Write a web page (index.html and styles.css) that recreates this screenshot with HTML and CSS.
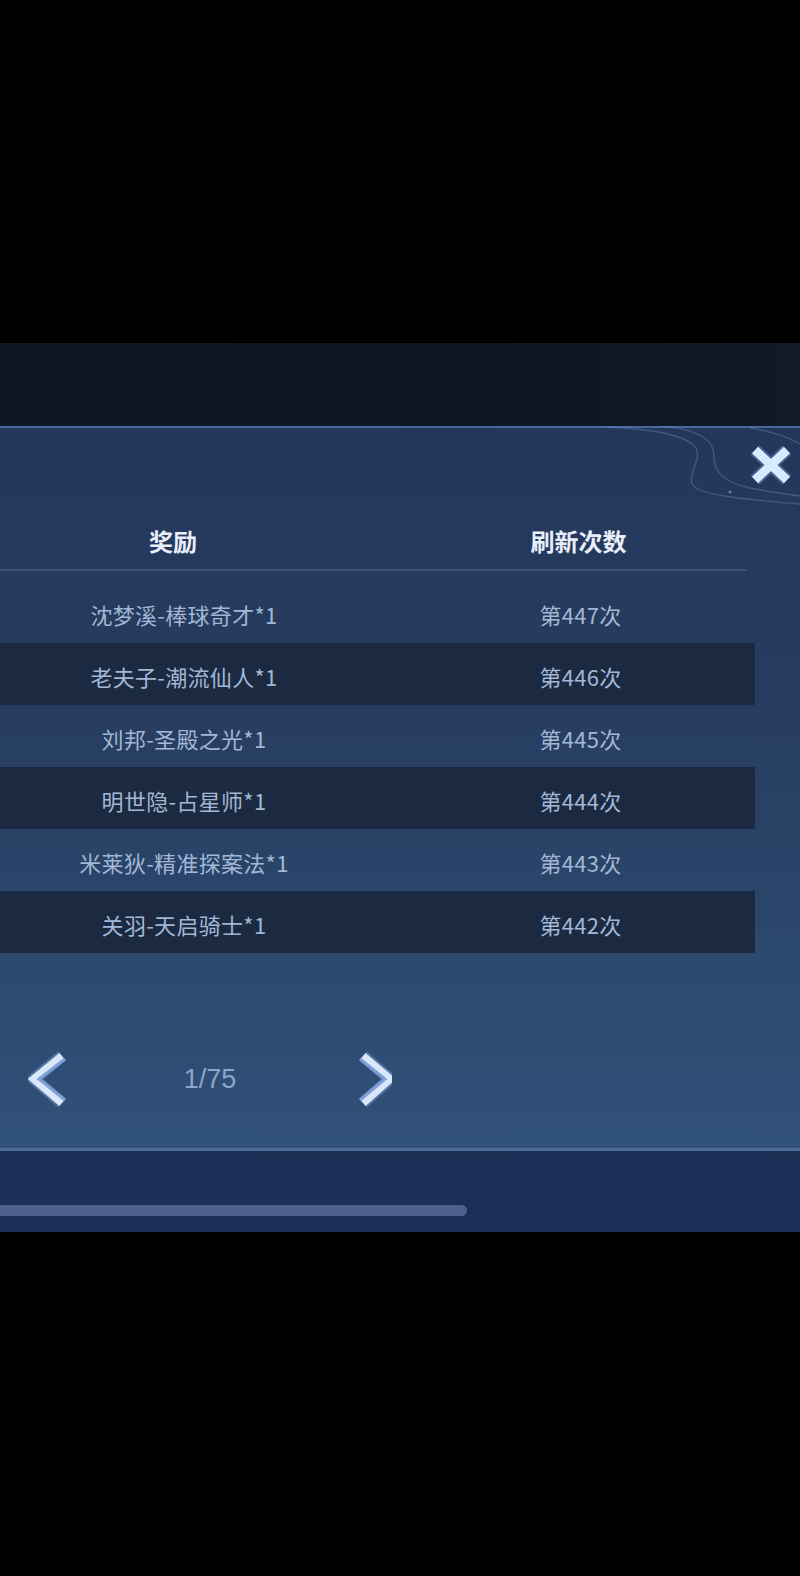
FILE: index.html
```html
<!DOCTYPE html>
<html lang="zh-CN">
<head>
    <meta charset="UTF-8">
    <meta name="viewport" content="width=device-width, initial-scale=1.0">
    <title>刷新记录</title>
    <link rel="stylesheet" href="styles.css">
</head>
<body>
    <div class="screen">
        <div class="letterbox-top"></div>
        <div class="topbar"></div>

        <div class="panel">
            <svg class="deco" width="200" height="90" viewBox="0 0 200 90">
                <path d="M7 1 C50 3, 86 8, 96 22 C102 34, 88 47, 92 58 C98 69, 140 73, 200 78" />
                <path d="M62 0 C100 4, 114 14, 114 30 C114 44, 120 55, 150 62 C170 66, 186 68, 200 70" />
                <path d="M150 2 C175 6, 190 12, 200 18" />
                <circle cx="130" cy="66" r="1.6" />
            </svg>

            <button class="close" aria-label="关闭">
                <svg width="44" height="40" viewBox="0 0 44 40">
                    <path class="x-glow" d="M6 5 L38 35 M38 5 L6 35" />
                    <path class="x-main" d="M6 5 L38 35 M38 5 L6 35" />
                </svg>
            </button>

            <div class="table">
                <div class="table-head">
                    <div class="head-reward">奖励</div>
                    <div class="head-count">刷新次数</div>
                </div>

                <div class="rows">
                    <div class="row">
                        <div class="cell-reward">沈梦溪-棒球奇才*1</div>
                        <div class="cell-count">第447次</div>
                    </div>
                    <div class="row dark">
                        <div class="cell-reward">老夫子-潮流仙人*1</div>
                        <div class="cell-count">第446次</div>
                    </div>
                    <div class="row">
                        <div class="cell-reward">刘邦-圣殿之光*1</div>
                        <div class="cell-count">第445次</div>
                    </div>
                    <div class="row dark">
                        <div class="cell-reward">明世隐-占星师*1</div>
                        <div class="cell-count">第444次</div>
                    </div>
                    <div class="row">
                        <div class="cell-reward">米莱狄-精准探案法*1</div>
                        <div class="cell-count">第443次</div>
                    </div>
                    <div class="row dark">
                        <div class="cell-reward">关羽-天启骑士*1</div>
                        <div class="cell-count">第442次</div>
                    </div>
                </div>
            </div>

            <div class="pager">
                <button class="page-btn prev" aria-label="上一页">
                    <svg width="40" height="60" viewBox="0 0 40 60">
                        <polyline class="chev-glow" points="34,7 6,30 34,54" />
                        <polyline class="chev-edge" points="34,7 6,30 34,54" />
                        <polyline class="chev-core" points="37,10 11,30 37,51" />
                    </svg>
                </button>
                <span class="page-num">1/75</span>
                <button class="page-btn next" aria-label="下一页">
                    <svg width="40" height="60" viewBox="0 0 40 60">
                        <polyline class="chev-glow" points="11,7 38,30 11,54" />
                        <polyline class="chev-edge" points="11,7 38,30 11,54" />
                        <polyline class="chev-core" points="8,10 33,30 8,51" />
                    </svg>
                </button>
            </div>
        </div>

        <div class="bottombar">
            <div class="scrollbar"></div>
        </div>
    </div>
</body>
</html>
```

FILE: styles.css
```css
* {
    margin: 0;
    padding: 0;
    box-sizing: border-box;
}

body {
    background-color: #000;
    font-family: "Noto Sans CJK SC", "Noto Sans", sans-serif;
}

.screen {
    width: 800px;
    height: 1576px;
    background-color: #000;
    overflow: hidden;
}

.letterbox-top {
    height: 343px;
    background-color: #000;
}

.topbar {
    height: 83px;
    background: linear-gradient(90deg, #0e1623 0%, #0d1520 60%, #101a28 100%);
}

.panel {
    position: relative;
    height: 725px;
    border-top: 2px solid #48699a;
    border-bottom: 3px solid #4a6c9c;
    background: linear-gradient(180deg, #24375a 0%, #263c5f 35%, #2b476c 70%, #305179 100%);
    padding-top: 83px;
}

.deco {
    position: absolute;
    top: -2px;
    right: 0;
}

.deco path {
    fill: none;
    stroke: rgba(105, 155, 215, 0.35);
    stroke-width: 1.4;
}

.deco circle {
    fill: rgba(120, 170, 230, 0.6);
}

.close {
    position: absolute;
    top: 17px;
    right: 7px;
    border: none;
    background: none;
    cursor: pointer;
}

.close svg {
    display: block;
}

.x-glow {
    stroke: rgba(120, 170, 240, 0.35);
    stroke-width: 13;
}

.x-main {
    stroke: #d8eaff;
    stroke-width: 9;
}

.table-head {
    display: grid;
    grid-template-columns: 346px 1fr;
    width: 747px;
    height: 60px;
    align-items: center;
    border-bottom: 2px solid #3a5479;
    color: #e8eefa;
    font-size: 24px;
    font-weight: 700;
}

.head-reward {
    text-align: center;
}

.head-count {
    text-align: center;
    padding-left: 64px;
}

.rows {
    margin-top: 10px;
}

.row {
    display: grid;
    grid-template-columns: 368px 1fr;
    width: 755px;
    height: 62px;
    padding-top: 4px;
    align-items: center;
    color: #a2b7d5;
    font-size: 22px;
    letter-spacing: 0.3px;
}

.row.dark {
    background-color: #1b2a41;
}

.cell-reward {
    text-align: center;
}

.cell-count {
    text-align: center;
    padding-left: 38px;
}

.pager {
    display: flex;
    align-items: center;
    height: 60px;
    margin-top: 96px;
    padding-left: 28px;
}

.page-btn {
    border: none;
    background: none;
    cursor: pointer;
}

.page-btn svg {
    display: block;
}

.chev-glow {
    fill: none;
    stroke: rgba(150, 190, 245, 0.35);
    stroke-width: 12;
}

.chev-edge {
    fill: none;
    stroke: #d9e7fb;
    stroke-width: 8;
}

.chev-core {
    fill: none;
    stroke: #7e9fd8;
    stroke-width: 3;
}

.page-num {
    width: 284px;
    text-align: center;
    font-family: "Liberation Sans", Arial, sans-serif;
    font-size: 27px;
    color: #8da6c7;
}

.bottombar {
    height: 81px;
    background: linear-gradient(180deg, #1d2f55 0%, #1c2f59 100%);
    padding-top: 54px;
}

.scrollbar {
    width: 467px;
    height: 11px;
    border-radius: 0 6px 6px 0;
    background-color: #4b608b;
}
```
